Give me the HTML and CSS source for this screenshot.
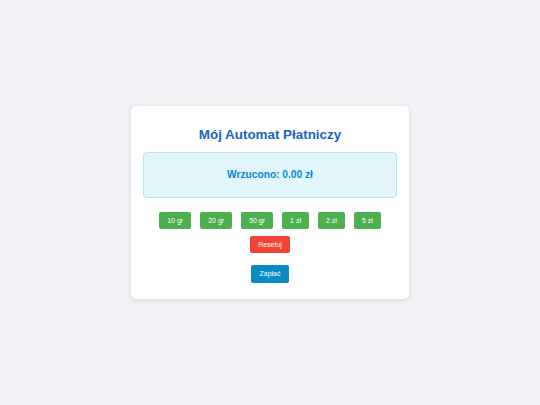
FILE: index.html
```html
<!DOCTYPE html>
<html lang="pl">
<head>
<meta charset="utf-8">
<title>Mój Automat Płatniczy</title>
<link rel="stylesheet" href="styles.css">
</head>
<body>
<div class="card">
  <h1 class="title">Mój Automat Płatniczy</h1>
  <div class="display">Wrzucono: 0.00 zł</div>
  <div class="coins">
    <button class="btn btn-coin">10 gr</button>
    <button class="btn btn-coin">20 gr</button>
    <button class="btn btn-coin">50 gr</button>
    <button class="btn btn-coin">1 zł</button>
    <button class="btn btn-coin">2 zł</button>
    <button class="btn btn-coin">5 zł</button>
    <button class="btn btn-reset">Resetuj</button>
  </div>
  <div class="actions">
    <button class="btn btn-pay">Zapłać</button>
  </div>
</div>
</body>
</html>
```
FILE: styles.css
```css
html, body {
  margin: 0;
  padding: 0;
}
body {
  background: #f0f2f5;
  font-family: "Liberation Sans", Arial, sans-serif;
  min-height: 100vh;
  display: flex;
  align-items: center;
  justify-content: center;
}
.card {
  width: 254px;
  background: #ffffff;
  border-radius: 5px;
  box-shadow: 0 1px 5px rgba(0, 0, 0, 0.12);
  padding: 21px 12px 16px;
  text-align: center;
}
.title {
  margin: 0 0 9px;
  font-size: 13.4px;
  line-height: 15.5px;
  font-weight: bold;
  color: #1565c0;
}
.display {
  background: #e1f5fb;
  border: 1px solid #b3e5f2;
  border-radius: 4px;
  padding: 16px 8px;
  font-size: 10.2px;
  line-height: 12px;
  font-weight: bold;
  color: #0288d1;
}
.coins {
  margin-top: 14px;
  display: flex;
  flex-wrap: wrap;
  justify-content: center;
  gap: 6.5px 9px;
}
.btn {
  font-family: "Liberation Sans", Arial, sans-serif;
  font-size: 7px;
  line-height: 8px;
  color: #ffffff;
  border: none;
  border-radius: 2px;
  padding: 4.7px 8px;
  cursor: pointer;
}
.btn-coin {
  background: #4caf50;
}
.btn-reset {
  background: #f44336;
}
.actions {
  margin-top: 12px;
  display: flex;
  justify-content: center;
}
.btn-pay {
  background: #0a8bc2;
}
```
